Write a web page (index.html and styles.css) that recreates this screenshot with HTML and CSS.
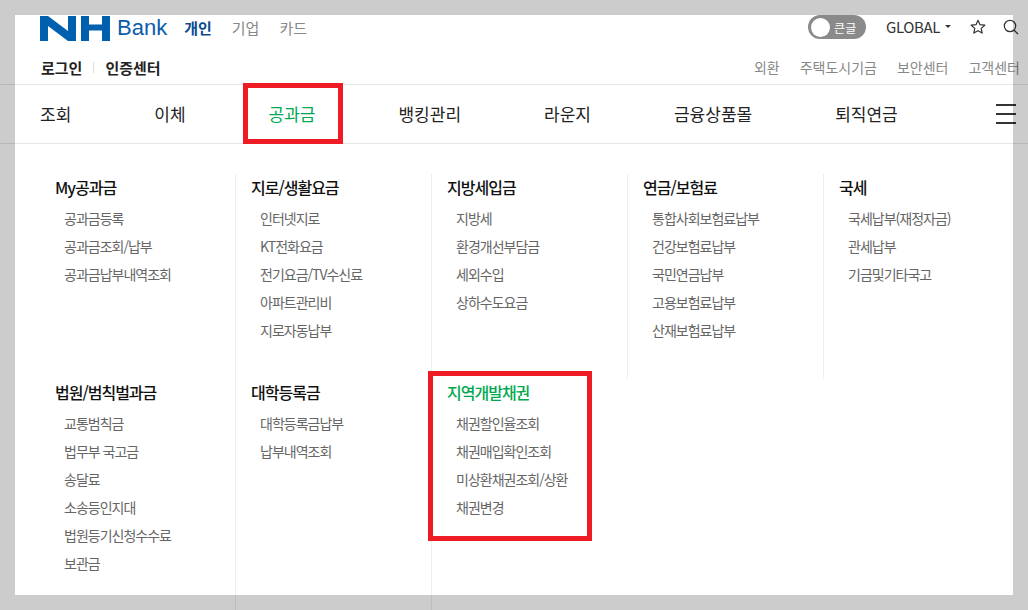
FILE: index.html
```html
<!DOCTYPE html>
<html lang="ko">
<head>
<meta charset="utf-8">
<title>NH Bank</title>
<link rel="stylesheet" href="styles.css">
</head>
<body>
<div class="page">
  <header class="header">
    <div class="top-row">
      <a class="logo">
        <svg class="logo-mark" viewBox="0 0 70 25" width="70" height="25" aria-hidden="true">
          <path fill="#0060b0" d="M0 0h8l20 15V0h8v25h-8L8 10v15H0zM41 0h8v8.500h13V0h8v25h-8V14.500H49V25h-8z"/>
        </svg>
        <span class="logo-text">Bank</span>
      </a>
      <nav class="segments">
        <a class="segment active">개인</a>
        <a class="segment">기업</a>
        <a class="segment">카드</a>
      </nav>
      <div class="tools">
        <div class="toggle"><span class="knob"></span><span class="toggle-label">큰글</span></div>
        <a class="global">GLOBAL<span class="caret"></span></a>
        <svg class="star" viewBox="0 0 16 16" width="16" height="16" aria-hidden="true">
          <path fill="none" stroke="#333" stroke-width="1.200" stroke-linejoin="round" d="M8 1.300l2 4.400 4.800.5-3.600 3.200 1 4.700L8 11.700l-4.200 2.400 1-4.700L1.200 6.200 6 5.700z"/>
        </svg>
        <svg class="search" viewBox="0 0 16 16" width="16" height="16" aria-hidden="true">
          <circle cx="7" cy="7" r="5.700" fill="none" stroke="#333" stroke-width="1.200"/>
          <path stroke="#333" stroke-width="1.200" d="M11 11l4 4"/>
        </svg>
      </div>
    </div>
    <div class="sub-row">
      <div class="auth">
        <a>로그인</a>
        <span class="auth-sep"></span>
        <a>인증센터</a>
      </div>
      <div class="links">
        <a>외환</a>
        <a>주택도시기금</a>
        <a>보안센터</a>
        <a>고객센터</a>
      </div>
    </div>
  </header>
  <nav class="gnb">
    <a>조회</a>
    <a>이체</a>
    <a class="current">공과금</a>
    <a>뱅킹관리</a>
    <a>라운지</a>
    <a>금융상품몰</a>
    <a>퇴직연금</a>
    <span class="burger"><i></i><i></i><i></i></span>
  </nav>
  <main class="mega">
    <div class="mega-row first">
      <section class="cell"><h3>My공과금</h3><ul><li>공과금등록</li><li>공과금조회/납부</li><li>공과금납부내역조회</li></ul></section>
      <section class="cell"><h3>지로/생활요금</h3><ul><li>인터넷지로</li><li>KT전화요금</li><li>전기요금/TV수신료</li><li>아파트관리비</li><li>지로자동납부</li></ul></section>
      <section class="cell"><h3>지방세입금</h3><ul><li>지방세</li><li>환경개선부담금</li><li>세외수입</li><li>상하수도요금</li></ul></section>
      <section class="cell"><h3>연금/보험료</h3><ul><li>통합사회보험료납부</li><li>건강보험료납부</li><li>국민연금납부</li><li>고용보험료납부</li><li>산재보험료납부</li></ul></section>
      <section class="cell last"><h3>국세</h3><ul><li>국세납부(재정자금)</li><li>관세납부</li><li>기금및기타국고</li></ul></section>
    </div>
    <div class="mega-row second">
      <section class="cell"><h3>법원/범칙벌과금</h3><ul><li>교통범칙금</li><li>법무부 국고금</li><li>송달료</li><li>소송등인지대</li><li>법원등기신청수수료</li><li>보관금</li></ul></section>
      <section class="cell"><h3>대학등록금</h3><ul><li>대학등록금납부</li><li>납부내역조회</li></ul></section>
      <section class="cell last highlighted"><h3>지역개발채권</h3><ul><li>채권할인율조회</li><li>채권매입확인조회</li><li>미상환채권조회/상환</li><li>채권변경</li></ul></section>
    </div>
  </main>
  <div class="frame"></div>
</div>
</body>
</html>
```
FILE: styles.css
```css
*, *::before, *::after { box-sizing: border-box; }
html, body { margin: 0; padding: 0; }
body {
  background: #fff;
  font-family: "Noto Sans CJK KR", "Noto Sans", "Liberation Sans", sans-serif;
  color: #222;
}
.page {
  position: relative;
  width: 1028px;
  height: 610px;
  overflow: hidden;
}
.frame {
  position: absolute;
  inset: 0;
  border: 15px solid rgba(0, 0, 0, 0.2);
  pointer-events: none;
}
.header { height: 85px; padding-top: 14px; border-bottom: 1px solid #e5e5e5; }
.top-row {
  display: flex;
  align-items: center;
  height: 28px;
  padding: 0 9px 0 40px;
}
.logo { display: flex; align-items: center; }
.logo-mark { display: block; }
.logo-text {
  font-family: "Liberation Sans", Arial, sans-serif;
  font-size: 22px;
  line-height: 28px;
  color: #0b5cae;
  margin-left: 7px;
}
.segments { display: flex; gap: 20px; margin-left: 17px; }
.segment { font-size: 15px; line-height: 28px; color: #888; }
.segment.active { color: #0b4c8c; font-weight: 700; }
.tools { display: flex; align-items: center; margin-left: auto; margin-top: -2px; }
.toggle {
  display: flex;
  align-items: center;
  width: 58px;
  height: 24px;
  border-radius: 12px;
  background: #8a8a8a;
  padding-left: 3px;
}
.knob { width: 19px; height: 19px; border-radius: 50%; background: #fff; }
.toggle-label { color: #fff; font-size: 12px; margin-left: 4px; }
.global {
  display: flex;
  align-items: center;
  margin-left: 20px;
  padding-bottom: 2px;
  font-size: 15px;
  letter-spacing: -0.4px;
  color: #333;
}
.caret {
  width: 0;
  height: 0;
  margin-left: 5px;
  border-left: 3px solid transparent;
  border-right: 3px solid transparent;
  border-top: 3px solid #333;
}
.star { margin-left: 19px; }
.search { margin-left: 17px; }
.sub-row {
  display: flex;
  justify-content: space-between;
  align-items: center;
  height: 28px;
  margin-top: 11px;
  padding: 0 8px 0 41px;
}
.auth { display: flex; align-items: center; font-size: 15px; font-weight: 700; color: #222; }
.auth-sep { width: 1px; height: 11px; background: #ddd; margin: 0 11px 0 11px; }
.links { display: flex; gap: 20px; font-size: 14px; color: #888; }
.gnb {
  position: relative;
  display: flex;
  align-items: center;
  gap: 83px;
  height: 59px;
  padding-left: 40px;
  border-bottom: 1px solid #e5e5e5;
  font-size: 17px;
  line-height: 26px;
  color: #222;
}
.gnb .current { position: relative; color: #00a84f; }
.gnb .current::after {
  content: "";
  position: absolute;
  left: -26px;
  right: -28px;
  top: -18px;
  bottom: -17px;
  border: 5px solid #ed1c24;
}
.burger {
  position: absolute;
  left: 996px;
  top: 19px;
  display: flex;
  flex-direction: column;
  gap: 7px;
  width: 20px;
}
.burger i { display: block; height: 2px; background: #333; }
.mega { padding: 30px 0 0 40px; }
.mega-row { display: flex; }
.mega-row.first { height: 205px; }
.mega-row.second { height: 240px; }
.cell {
  width: 196px;
  padding-left: 15px;
  border-right: 1px solid #eee;
}
.cell.last { border-right: 0; }
.cell h3 {
  margin: -1px 0 0;
  font-size: 16px;
  line-height: 28px;
  font-weight: 500;
  letter-spacing: -1px;
  color: #111;
}
.cell ul { list-style: none; margin: 3px 0 0; padding: 0 0 0 9px; }
.cell li {
  font-size: 14px;
  line-height: 28px;
  letter-spacing: -1px;
  color: #666;
}
.highlighted { position: relative; }
.highlighted h3 { color: #00a84f; }
.highlighted::after {
  content: "";
  position: absolute;
  left: -4px;
  top: -8px;
  width: 164px;
  height: 170px;
  border: 5px solid #ed1c24;
}
```
